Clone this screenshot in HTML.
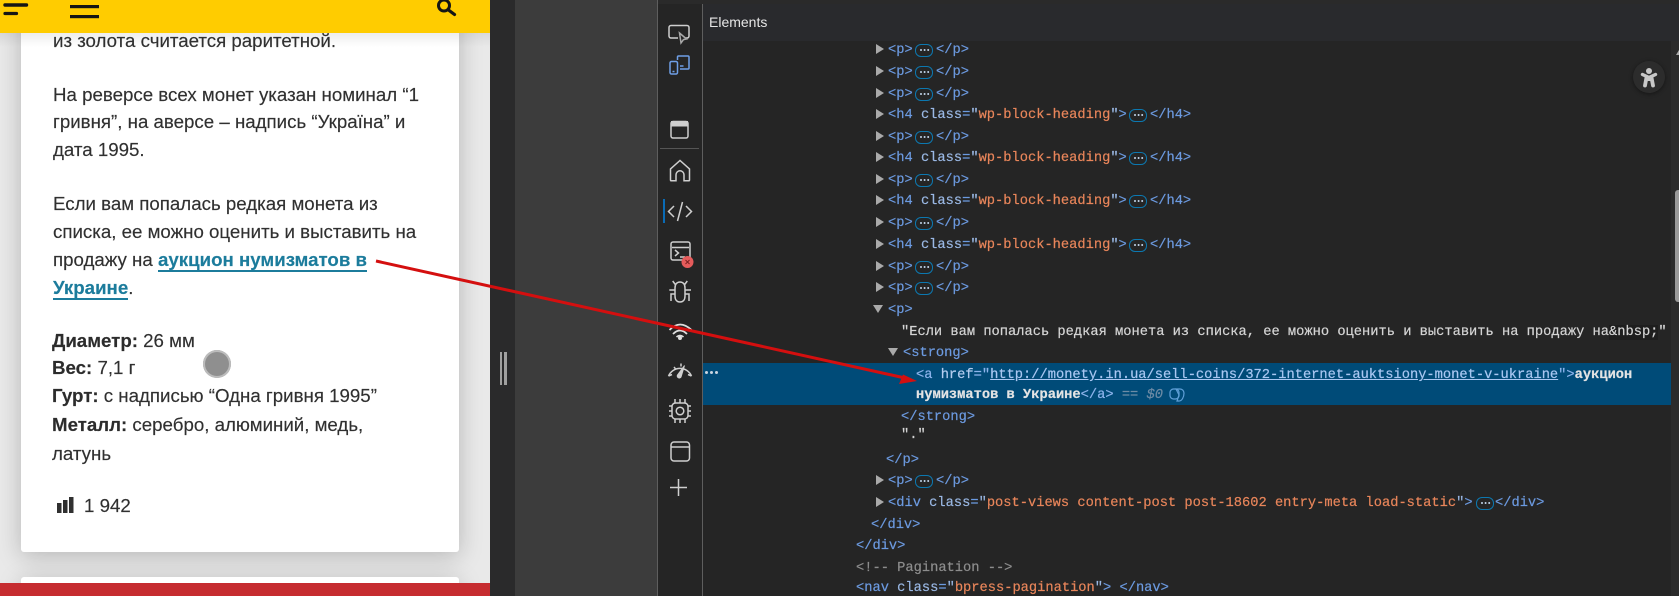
<!DOCTYPE html>
<html lang="ru"><head><meta charset="utf-8"><title>DevTools</title>
<style>
html,body{margin:0;padding:0;width:1679px;height:596px;overflow:hidden;background:#252525}
.a{position:absolute}
#stage{position:relative;width:1679px;height:596px;overflow:hidden}
#left{position:absolute;left:0;top:0;width:490px;height:596px;background:#e9e9e9;overflow:hidden}
.card{position:absolute;left:21px;width:438px;background:#fff;border-radius:3px;box-shadow:0 4px 24px rgba(0,0,0,.22)}
.t{position:absolute;left:53px;white-space:nowrap;font:18.7px/28px "Liberation Sans",sans-serif;color:#303030;-webkit-text-stroke:.15px #303030}
.t b{color:#2c2c2c}
.t a{color:#1c7c9c;-webkit-text-stroke:.15px #1c7c9c;font-weight:bold;text-decoration:none;border-bottom:2px solid #1c7c9c;line-height:20px;display:inline-block}
.r{position:absolute;margin-top:1px;height:17px;overflow:visible;white-space:pre;font:13.73px/20px "Liberation Mono",monospace;color:#d5d5d5;-webkit-text-stroke:.2px currentColor}
.k{color:#6c9ae0}.n{color:#9ab8e4}.v{color:#e8855a}.g{color:#8d8d8d}.w{color:#e4e4e4}
.u{text-decoration:underline;color:#a9c7f2}
.tri{position:absolute;width:0;height:0;border-left:8px solid #aaa;border-top:5.5px solid transparent;border-bottom:5.5px solid transparent}
.trd{position:absolute;width:0;height:0;border-top:8px solid #aaa;border-left:5.5px solid transparent;border-right:5.5px solid transparent}
.dots{display:inline-block;position:absolute;width:16px;height:11px;border:1px solid #0c78b0;border-radius:6px;box-sizing:content-box}
.dots:after{content:"";position:absolute;left:3.5px;top:3.5px;width:2.6px;height:2.6px;border-radius:50%;background:#c4d8ee;box-shadow:3.6px 0 0 #c4d8ee,7.2px 0 0 #c4d8ee}
svg{position:absolute;overflow:visible}
</style></head><body>
<div id="stage">
<div id="left">
  <div class="card" style="top:-40px;height:592px"></div>
  <div class="card" style="top:577px;height:19px;border-radius:3px 3px 0 0"></div>
  <div class="a" style="left:0;top:33px;width:490px;height:14px;background:linear-gradient(rgba(0,0,0,.07),rgba(0,0,0,0))"></div>
  <div class="t" style="top:27px">из золота считается раритетной.</div>
  <div class="t" style="top:81px">На реверсе всех монет указан номинал “1</div>
  <div class="t" style="top:108px">гривня”, на аверсе – надпись “Україна” и</div>
  <div class="t" style="top:136px">дата 1995.</div>
  <div class="t" style="top:190px">Если вам попалась редкая монета из</div>
  <div class="t" style="top:218px">списка, ее можно оценить и выставить на</div>
  <div class="t" style="top:246px">продажу на <a>аукцион нумизматов в</a></div>
  <div class="t" style="top:274px"><a>Украине</a>.</div>
  <div class="t" style="top:327px;left:52px"><b>Диаметр:</b> 26 мм</div>
  <div class="t" style="top:354px;left:52px"><b>Вес:</b> 7,1 г</div>
  <div class="t" style="top:382px;left:52px"><b>Гурт:</b> с надписью “Одна гривня 1995”</div>
  <div class="t" style="top:411px;left:52px"><b>Металл:</b> серебро, алюминий, медь,</div>
  <div class="t" style="top:440px;left:52px">латунь</div>
  <svg style="left:57px;top:497px" width="17" height="17"><rect x="0" y="6" width="4.5" height="10" fill="#303030"/><rect x="6" y="3" width="4.5" height="13" fill="#303030"/><rect x="12" y="0" width="4.5" height="16" fill="#303030"/></svg>
  <div class="t" style="top:492px;left:84px">1 942</div>
  <div class="a" style="left:203px;top:350px;width:28px;height:28px;border-radius:50%;background:#8f8f8f;box-shadow:inset 0 0 0 2px #bcbcbc"></div>
  <div class="a" style="left:0;top:583px;width:490px;height:13px;background:#c62c30"></div>
  <div class="a" style="left:0;top:0;width:490px;height:33px;background:#ffcc00"></div>
  <svg style="left:0;top:0" width="490" height="33">
    <path d="M5 5H26.500" stroke="#151515" stroke-width="3.400" stroke-linecap="round"/>
    <path d="M5 13.500H16.500" stroke="#151515" stroke-width="3.200" stroke-linecap="round"/>
    <rect x="70" y="5" width="29" height="3.200" fill="#151515"/>
    <rect x="70" y="15" width="29" height="3.200" fill="#151515"/>
    <circle cx="444" cy="5.500" r="5.500" fill="none" stroke="#151515" stroke-width="3"/>
    <path d="M448.500 10L454.500 14.500" stroke="#151515" stroke-width="3.200" stroke-linecap="round"/>
  </svg>
</div>
<div class="a" style="left:490px;top:0;width:25px;height:596px;background:#2a2a2b"></div>
<div class="a" style="left:515px;top:0;width:142px;height:596px;background:#3c3c3c"></div>
<div class="a" style="left:500px;top:352px;width:2px;height:33px;background:#a0a0a0"></div>
<div class="a" style="left:504px;top:352px;width:3px;height:33px;background:#a0a0a0"></div>
<div class="a" style="left:657px;top:0;width:1px;height:596px;background:#5e5e5e"></div>
<div class="a" style="left:658px;top:0;width:44px;height:596px;background:#252525"></div>
<div class="a" style="left:702px;top:4px;width:1px;height:592px;background:#5e5e5e"></div>
<div class="a" style="left:658px;top:0;width:1021px;height:4px;background:#2a2a2a"></div>
<div class="a" style="left:703px;top:4px;width:976px;height:37px;background:#292a2d"></div>
<div class="a" style="left:709px;top:12px;font:14px/20px 'Liberation Sans',sans-serif;color:#e6e6e6">Elements</div>

<svg style="left:658px;top:0" width="44" height="596" fill="none" stroke="#cfcfcf" stroke-width="1.500">
  <path d="M20 38H13a2 2 0 0 1-2-2V27.500a2 2 0 0 1 2-2H29a2 2 0 0 1 2 2V36a2 2 0 0 1-2 2h-2"/>
  <path d="M21.500 33l7 6-3 .6-2.500 3.400z" stroke="#a8a8a8"/>
  <g stroke="#6f9fe6"><path d="M19.500 60v-3a1 1 0 0 1 1-1H30a1 1 0 0 1 1 1v11a1 1 0 0 1-1 1H22"/><rect x="12" y="61.500" width="7.500" height="12.500" rx="1.500"/><path d="M14.500 71.500h2M22 66h3.500"/></g>
  <rect x="13" y="121.500" width="17" height="16.500" rx="2"/><rect x="13" y="121" width="17" height="5.500" fill="#cfcfcf" stroke="none"/>
  <path d="M2 148.500H41" stroke="#555" stroke-width="1"/>
  <path d="M12.500 180v-11l9.500-8.500 9.500 8.500v11a.8.8 0 0 1-.8.800h-4.700v-6a4 4 0 0 0-8 0v6h-4.700a.8.8 0 0 1-.8-.8z"/>
  <path d="M16 206l-5.500 5.500L16 217M28 206l5.500 5.500L28 217M24.500 202l-5 19"/>
  <rect x="13" y="242" width="19" height="18" rx="2"/>
  <path d="M14 247.500H31"/><path d="M17 250l3.500 3L17 256M22 257h5"/>
  <path d="M17 288c0-4 2-6 5-6s5 2 5 6v8c0 4-2 6-5 6s-5-2-5-6z"/>
  <path d="M17.700 285l-3-4M26.300 285l3-4M11.300 290H17M27 290h6M17 294h-4v7M27 294h4v7"/>
  <path d="M11.500 330Q22 319 33.500 330M15 334Q22 327 29 334M18.500 337Q22 334 25.500 337" stroke-width="1.800" stroke="#dedede"/>
  <circle cx="22" cy="338" r="2" fill="#e2e2e2" stroke="none"/>
  <path d="M10.500 376A12.500 12.500 0 0 1 33.500 376M10.500 376l3.500-1.500M33.500 376l-3.500-1.500M16 367l2 2.500M23 363.500v3"/>
  <path d="M26.500 365.500L19.500 375a2 2 0 0 0 3.500 2z" fill="#cfcfcf" stroke-width="1"/>
  <rect x="14" y="403" width="16" height="16" rx="3.500"/><circle cx="22" cy="411" r="3.800"/>
  <path d="M17 399v4M22 399v4M27 399v4M17 419v4M22 419v4M27 419v4M11 406h3M11 411h3M11 416h3M30 406h3M30 411h3M30 416h3"/>
  <rect x="13" y="442" width="18.500" height="19" rx="3"/><path d="M13 447H31.500"/>
  <path d="M20.500 479V496M12 487.500H29"/>
</svg>
<svg style="left:658px;top:0" width="44" height="300"><circle cx="29.500" cy="262" r="6" fill="#e55b5b"/><path d="M27.500 260l4 4M31.500 260l-4 4" stroke="#7a2020" stroke-width="1"/></svg>
<div class="a" style="left:663px;top:199px;width:2px;height:24px;background:#0a6bb5"></div>

<div class="a" style="left:703px;top:363px;width:968px;height:42px;background:#004b78"></div>
<div class="a" style="left:705px;top:371px"><span style="display:block;width:3px;height:3px;border-radius:50%;background:#c8d4e0;box-shadow:5px 0 0 #c8d4e0,10px 0 0 #c8d4e0"></span></div>
<div class="a" style="left:1671px;top:41px;width:8px;height:555px;background:#2b2b2b"></div>
<div class="a" style="left:1675px;top:190px;width:4px;height:112px;background:#9a9a9a;border-radius:3px 0 0 3px"></div>
<div class="a" style="left:1676px;top:50px;width:0;height:0;border-left:3px solid transparent;border-bottom:5px solid #aaa"></div>
<div class="a" style="left:1633px;top:61px;width:32px;height:32px;border-radius:50%;background:#2c2c2c;box-shadow:0 1px 4px rgba(0,0,0,.45)"></div>
<svg style="left:1633px;top:61px" width="32" height="32"><circle cx="16" cy="10" r="3" fill="#c8c8c8"/><path d="M9.500 13.500L16 16.500L22.500 13.500" fill="none" stroke="#c8c8c8" stroke-width="3.400" stroke-linecap="round" stroke-linejoin="round"/><path d="M13.500 16.500L12 24.500M18.500 16.500L20 24.500" stroke="#c8c8c8" stroke-width="3.800" stroke-linecap="round"/><rect x="12.500" y="15" width="7" height="5" fill="#c8c8c8"/></svg>

<!-- rows -->
<i class="tri" style="left:876px;top:44px"></i><div class="r k" style="left:888px;top:40px">&lt;p&gt;</div><span class="dots" style="left:915px;top:44px"></span><div class="r k" style="left:936px;top:40px">&lt;/p&gt;</div>
<i class="tri" style="left:876px;top:66px"></i><div class="r k" style="left:888px;top:62px">&lt;p&gt;</div><span class="dots" style="left:915px;top:66px"></span><div class="r k" style="left:936px;top:62px">&lt;/p&gt;</div>
<i class="tri" style="left:876px;top:88px"></i><div class="r k" style="left:888px;top:84px">&lt;p&gt;</div><span class="dots" style="left:915px;top:88px"></span><div class="r k" style="left:936px;top:84px">&lt;/p&gt;</div>
<i class="tri" style="left:876px;top:109px"></i><div class="r k" style="left:888px;top:105px">&lt;h4 <span class="n">class</span>=<span class="n">"</span><span class="v">wp-block-heading</span><span class="n">"</span>&gt;</div><span class="dots" style="left:1129px;top:109px"></span><div class="r k" style="left:1150px;top:105px">&lt;/h4&gt;</div>
<i class="tri" style="left:876px;top:131px"></i><div class="r k" style="left:888px;top:127px">&lt;p&gt;</div><span class="dots" style="left:915px;top:131px"></span><div class="r k" style="left:936px;top:127px">&lt;/p&gt;</div>
<i class="tri" style="left:876px;top:152px"></i><div class="r k" style="left:888px;top:148px">&lt;h4 <span class="n">class</span>=<span class="n">"</span><span class="v">wp-block-heading</span><span class="n">"</span>&gt;</div><span class="dots" style="left:1129px;top:152px"></span><div class="r k" style="left:1150px;top:148px">&lt;/h4&gt;</div>
<i class="tri" style="left:876px;top:174px"></i><div class="r k" style="left:888px;top:170px">&lt;p&gt;</div><span class="dots" style="left:915px;top:174px"></span><div class="r k" style="left:936px;top:170px">&lt;/p&gt;</div>
<i class="tri" style="left:876px;top:195px"></i><div class="r k" style="left:888px;top:191px">&lt;h4 <span class="n">class</span>=<span class="n">"</span><span class="v">wp-block-heading</span><span class="n">"</span>&gt;</div><span class="dots" style="left:1129px;top:195px"></span><div class="r k" style="left:1150px;top:191px">&lt;/h4&gt;</div>
<i class="tri" style="left:876px;top:217px"></i><div class="r k" style="left:888px;top:213px">&lt;p&gt;</div><span class="dots" style="left:915px;top:217px"></span><div class="r k" style="left:936px;top:213px">&lt;/p&gt;</div>
<i class="tri" style="left:876px;top:239px"></i><div class="r k" style="left:888px;top:235px">&lt;h4 <span class="n">class</span>=<span class="n">"</span><span class="v">wp-block-heading</span><span class="n">"</span>&gt;</div><span class="dots" style="left:1129px;top:239px"></span><div class="r k" style="left:1150px;top:235px">&lt;/h4&gt;</div>
<i class="tri" style="left:876px;top:261px"></i><div class="r k" style="left:888px;top:257px">&lt;p&gt;</div><span class="dots" style="left:915px;top:261px"></span><div class="r k" style="left:936px;top:257px">&lt;/p&gt;</div>
<i class="tri" style="left:876px;top:282px"></i><div class="r k" style="left:888px;top:278px">&lt;p&gt;</div><span class="dots" style="left:915px;top:282px"></span><div class="r k" style="left:936px;top:278px">&lt;/p&gt;</div>
<i class="trd" style="left:873px;top:305px"></i><div class="r k" style="left:888px;top:300px">&lt;p&gt;</div>
<div class="r" style="left:901px;top:322px">"Если вам попалась редкая монета из списка, ее можно оценить и выставить на продажу на<span style="background:#1e1e1e">&amp;nbsp;</span>"</div>
<i class="trd" style="left:888px;top:348px"></i><div class="r k" style="left:903px;top:343px">&lt;strong&gt;</div>
<div class="r k" style="left:916px;top:365px;color:#8db4ec">&lt;a <span style="color:#b4cdf0">href</span>="<span class="u">http://monety.in.ua/sell-coins/372-internet-auktsiony-monet-v-ukraine</span>"&gt;<span class="w" style="font-weight:bold">аукцион</span></div>
<div class="r k" style="left:916px;top:385px;color:#8db4ec"><span class="w" style="font-weight:bold">нумизматов в Украине</span>&lt;/a&gt; <span style="color:#6d8ba5;font-style:italic">== $0</span></div>
<svg style="left:1169px;top:387px" width="17" height="15" fill="none" stroke="#5fa0d8" stroke-width="1.200"><rect x="1" y="2" width="9" height="10" rx="3.500"/><path d="M7 2h4a4 4 0 0 1 4 4c0 4-2 8-5 8H8l2-6z"/></svg>
<div class="r k" style="left:901px;top:407px">&lt;/strong&gt;</div>
<div class="r" style="left:901px;top:425px">"."</div>
<div class="r k" style="left:886px;top:450px">&lt;/p&gt;</div>
<i class="tri" style="left:876px;top:475px"></i><div class="r k" style="left:888px;top:471px">&lt;p&gt;</div><span class="dots" style="left:915px;top:475px"></span><div class="r k" style="left:936px;top:471px">&lt;/p&gt;</div>
<i class="tri" style="left:876px;top:497px"></i><div class="r k" style="left:888px;top:493px">&lt;div <span class="n">class</span>=<span class="n">"</span><span class="v">post-views content-post post-18602 entry-meta load-static</span><span class="n">"</span>&gt;</div><span class="dots" style="left:1476px;top:497px"></span><div class="r k" style="left:1495px;top:493px">&lt;/div&gt;</div>
<div class="r k" style="left:871px;top:515px">&lt;/div&gt;</div>
<div class="r k" style="left:856px;top:536px">&lt;/div&gt;</div>
<div class="r g" style="left:856px;top:558px">&lt;!-- Pagination --&gt;</div>
<div class="r k" style="left:856px;top:578px">&lt;nav <span class="n">class</span>=<span class="n">"</span><span class="v">bpress-pagination</span><span class="n">"</span>&gt; &lt;/nav&gt;</div>

<svg style="left:0;top:0" width="1679" height="596">
  <path d="M376 261L905 378" stroke="#d40f0f" stroke-width="3" fill="none"/>
  <path d="M917 381L899 384L903 374.500z" fill="#d40f0f"/>
</svg>
</div>
</body></html>
